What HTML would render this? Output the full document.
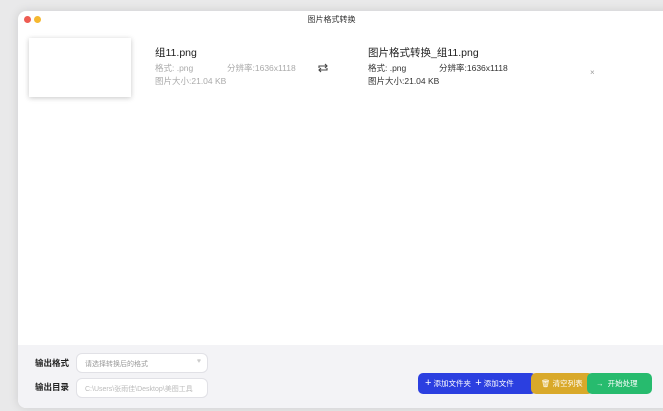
<!DOCTYPE html>
<html><head><meta charset="utf-8"><style>
*{margin:0;padding:0;box-sizing:border-box}
body{width:663px;height:411px;overflow:hidden;background:#e9e9ea;font-family:"Liberation Sans","Noto Sans CJK SC",sans-serif;position:relative}
.win{position:absolute;left:18px;top:11px;width:660px;height:397px;background:#fff;border-radius:8px;box-shadow:0 0 10px rgba(0,0,0,.12);overflow:hidden}
.dot{position:absolute;top:5px;width:7px;height:7px;border-radius:50%}
.title{position:absolute;top:3px;left:0;width:663px;text-align:center;font-size:8px;color:#333}
.t{position:absolute;white-space:nowrap}
.bottom{position:absolute;left:0;top:334px;width:100%;height:63px;background:#f3f3f6}
.inp{position:absolute;left:58px;width:132px;height:20px;background:#fff;border:1px solid #e1e1e6;border-radius:6px;font-size:7px;color:#999;padding:5px 8px}
.lbl{position:absolute;left:17px;font-size:8.5px;color:#222;font-weight:bold}
.btn{position:absolute;top:362px;height:21px;color:#fff;font-size:7.5px;line-height:21px;border-radius:5px}
</style></head><body>
<div class="win">
<div class="dot" style="left:6px;background:#ee5c52"></div>
<div class="dot" style="left:16px;background:#f5b830"></div>
<div class="title" style="left:-18px">图片格式转换</div>
<div style="position:absolute;left:11px;top:27px;width:102px;height:59px;background:#fff;box-shadow:0 1px 5px rgba(0,0,0,.22)"></div>
<div class="t" style="left:137px;top:34px;font-size:10.5px;color:#222">组11.png</div>
<div class="t" style="left:137px;top:51px;font-size:8.5px;color:#aaa">格式: .png</div>
<div class="t" style="left:209px;top:51px;font-size:8.5px;color:#aaa">分辨率:1636x1118</div>
<div class="t" style="left:137px;top:64px;font-size:8.5px;color:#aaa">图片大小:21.04 KB</div>
<svg class="t" style="left:299px;top:51px" width="12" height="12" viewBox="0 0 12 12" fill="none" stroke="#444" stroke-width="1.1"><path d="M2 6V4h8M8 2l2 2-2 2M10 6v2H2M4 10L2 8l2-2"/></svg>
<div class="t" style="left:350px;top:34px;font-size:10.5px;color:#222">图片格式转换_组11.png</div>
<div class="t" style="left:350px;top:51px;font-size:8.5px;color:#333">格式: .png</div>
<div class="t" style="left:421px;top:51px;font-size:8.5px;color:#333">分辨率:1636x1118</div>
<div class="t" style="left:350px;top:64px;font-size:8.5px;color:#333">图片大小:21.04 KB</div>
<div class="t" style="left:572px;top:57px;font-size:8px;color:#999">×</div>
<div class="bottom">
<div class="lbl" style="top:12px">输出格式</div>
<div class="inp" style="top:8px">请选择转换后的格式<span style="position:absolute;right:6px;top:4px;color:#ccc;font-size:7px">♥</span></div>
<div class="lbl" style="top:36px">输出目录</div>
<div class="inp" style="top:33px;color:#bbb">C:\Users\张雨佳\Desktop\美图工具</div>
</div>
</div>
<div class="btn" style="left:418px;top:373px;width:118px;background:#2b3fe0;padding-left:7px"><span style="font-size:11px">+</span> 添加文件夹 &nbsp;<span style="font-size:11px">+</span> 添加文件</div>
<div class="btn" style="left:531px;top:373px;width:62px;background:#d9a92a;padding-left:10px">🗑 清空列表</div>
<div class="btn" style="left:587px;top:373px;width:65px;background:#27bb6e;padding-left:9px">→ &nbsp;开始处理</div>
</body></html>
